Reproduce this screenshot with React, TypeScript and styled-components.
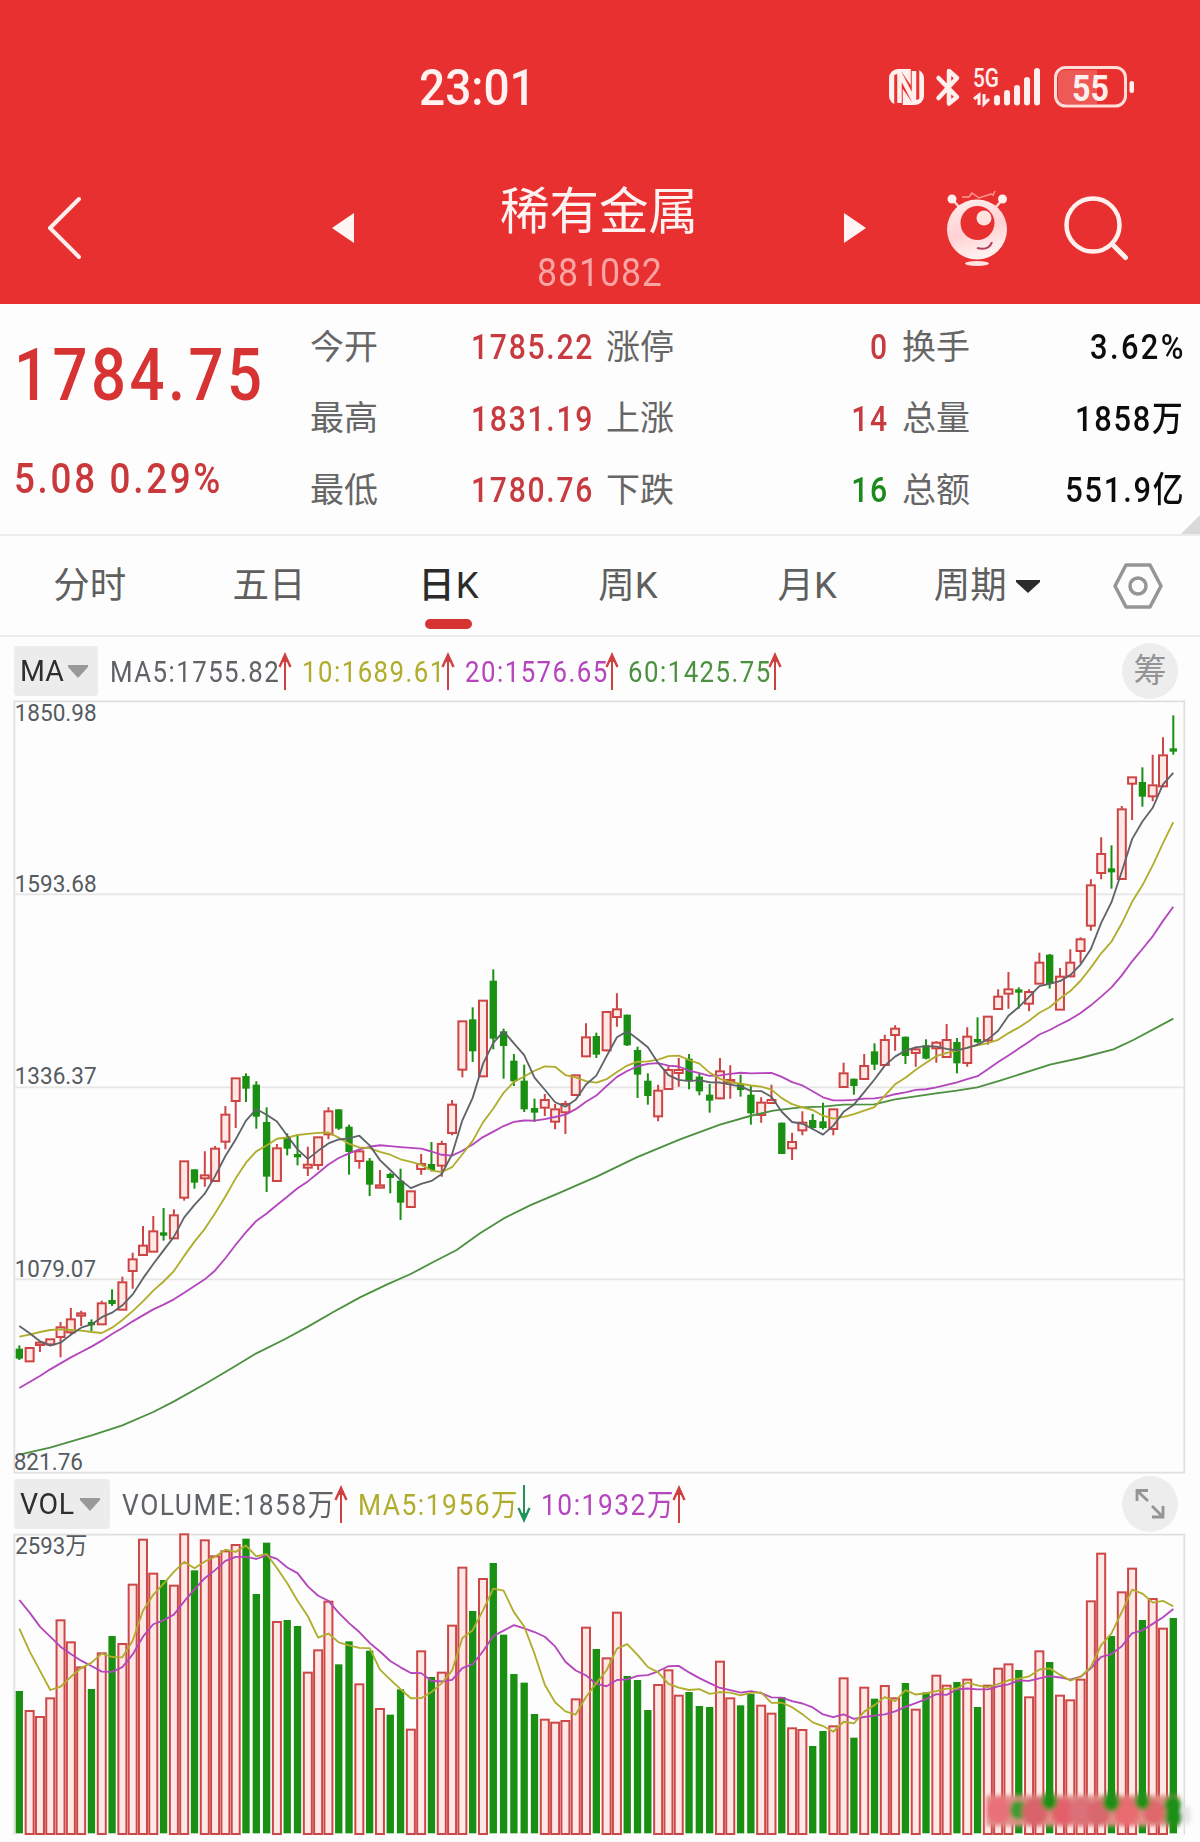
import React from "react";
import styled, { createGlobalStyle } from "styled-components";

const RED = "#d73333";
const GREEN = "#1a9012";
const GREY = "#5f6368";
const OLIVE = "#b0ac2c";
const PURPLE = "#b545bd";
const FOREST = "#4c9040";

/* ---------- data ---------- */

type Candle = [kind: "r" | "g", high: number, top: number, bottom: number, low: number];

// Each session: direction, high, body top, body bottom, low (chart units, three per pixel).
const section = (base: number, rows: string): Candle[] =>
  rows
    .trim()
    .split(/\s+/)
    .map((row) => {
      const [h, t, b, l] = row.slice(1).split(",").map(Number);
      return [row[0] as "r" | "g", h + base, t + base, b + base, l + base];
    });

const candles: Candle[] = [
  ...section(
    1050,
    `g886,896,926,930 r892,892,935,935 r872,876,886,906 r866,866,884,886 r816,830,862,922 r774,806,848,852
     r782,788,798,828 g808,816,826,844 r752,758,824,824 g718,750,762,768 r680,695,780,780 r608,626,664,716
     r528,585,616,616 r498,542,606,606 g474,547,557,572 r478,494,566,566 r332,332,444,452 g358,358,398,416
     r304,374,386,410 r288,294,394,394 r168,192,276,298 r83,83,154,234 g70,78,116,156 g94,104,200,236
     g172,216,380,426 r282,293,394,394 g250,262,296,316 g252,312,322,346 r290,342,354,378 r260,260,346,360
     r172,182,254,268 g178,178,236,240 g224,230,306,374 r300,302,334,356 g324,332,404,438 r360,404,414,414
     g368,372,384,430 g356,392,458,510 r422,422,472,472`
  ),
  ...section(
    750,
    `r612,640,658,674 g576,642,660,664 r572,580,648,680 r450,462,550,556 r212,212,360,382 g172,208,304,336
     r150,150,380,380 g58,92,266,298 g236,244,288,386 g312,332,394,408 g344,392,478,486 g446,474,488,516
     r432,448,474,498 r462,476,516,538 r452,460,488,552 r374,374,436,438 r220,260,320,322 g248,258,314,324
     r184,184,302,304 r130,176,202,230 g194,194,286,288 g290,300,374,444 g370,392,438,464 r404,420,500,514
     r346,358,418,420 r324,358,370,410 g312,326,392,418 g370,380,424,436 g402,434,452,488 r324,362,446,448
     r346,388,398,446 g374,400,420,440 g408,434,490,524 r442,456,496,518 r404,448,460,462 g518,518,612,612
     r548,574,596,630 r484,516,542,556 g492,510,534,540`
  ),
  ...section(
    0,
    `g1208,1264,1284,1288 r1226,1226,1288,1306 r1088,1118,1162,1162 g1136,1136,1158,1184 r1062,1096,1138,1140
     g1030,1054,1094,1110 r1004,1018,1096,1098 r976,984,1006,1052 g1010,1010,1068,1092 r1040,1046,1060,1100
     g1018,1036,1076,1078 r1024,1026,1046,1088 r972,1018,1072,1072 g1014,1026,1090,1120 r982,1008,1090,1100
     g952,1017,1027,1030 r948,948,1022,1034 r868,888,928,930 r816,866,882,926 g862,868,878,926 r868,874,912,934
     r758,786,852,852 g762,764,852,866 r804,828,930,930 r748,786,830,832 r712,716,754,790 r538,554,678,692
     r412,460,520,538 g436,505,517,566 r318,326,538,538 r230,230,252,360 g202,246,290,320 r164,254,290,304
     r112,164,260,260 g46,145,155,164`
  ),
];

const volumes = [
  693, 750, 768, 712, 478, 544, 619, 687, 577, 528, 549, 371, 236, 338, 360, 374, 220, 331, 238, 286, 271, 252, 236,
  402, 248, 483, 480, 498, 635, 568, 422, 613, 544, 670, 572, 744, 764, 688, 806, 571, 651, 635, 494, 320, 453, 354,
  309, 524, 642, 668, 762, 776, 785, 780, 715, 500, 567, 592, 455, 648, 660, 750, 672, 628, 704, 696, 738, 741, 602,
  712, 736, 702, 734, 758, 711, 802, 807, 858, 813, 796, 652, 833, 680, 716, 675, 712, 669, 746, 697, 644, 674, 666,
  656, 741, 674, 623, 610, 630, 709, 571, 606, 704, 718, 656, 421, 278, 528, 394, 323, 480, 414, 503, 474,
];

const xAt = (i: number) => 58 + i * 30.91;

// Moving average whose first values, from before the visible window, are supplied.
const average = (values: number[], span: number, lead: number[]) => [
  ...lead,
  ...values
    .slice(span - 1)
    .map((_, i) => values.slice(i, i + span).reduce((sum, v) => sum + v, 0) / span),
];

const toPoints = (ys: number[]) => ys.map((y, i) => `${xAt(i).toFixed(1)},${y.toFixed(1)}`).join(" ");

const closes = candles.map(([kind, , top, bottom]) => (kind === "r" ? top : bottom));
const ma5 = average(closes, 5, [1878, 1900, 1924, 1937]);
const ma10 = average(closes, 10, [1910, 1904, 1896, 1890, 1888, 1890, 1892, 1896, 1899]);
const ma20 = average(
  closes,
  20,
  [2064, 2046, 2028, 2008, 1990, 1972, 1956, 1940, 1922, 1902, 1884, 1864, 1846, 1828, 1814, 1798, 1778, 1758, 1738]
);
const ma60 =
  "58,2264 150,2243 275,2206 367,2176 460,2136 522,2104 615,2052 690,2008 769,1960 850,1920 924,1880 1000,1836 " +
  "1080,1792 1160,1754 1232,1722 1300,1686 1370,1650 1440,1600 1510,1556 1590,1516 1680,1478 1790,1430 1910,1372 " +
  "2040,1318 2160,1274 2250,1248 2320,1232 2400,1222 2469,1220 2530,1214 2623,1213 2685,1198 2808,1180 2870,1172 " +
  "2932,1162 3000,1142 3150,1094 3241,1074 3340,1048 3400,1020 3520,956";
const volMa5 = average(volumes, 5, [506, 574, 632, 690]);
const volMa10 = average(volumes, 10, [420, 458, 500, 530, 560, 582, 602, 618, 635]);

/* ---------- styles ---------- */

const GlobalStyle = createGlobalStyle`
  body { margin: 0; background: #fdfdfd; }
  * { box-sizing: border-box; }
`;

const Page = styled.div`
  width: 1200px;
  height: 1842px;
  display: flex;
  flex-direction: column;
  overflow: hidden;
  background: #fdfdfd;
  font-family: Roboto, "Noto Sans CJK SC", sans-serif;
`;

const Header = styled.header`
  height: 304px;
  flex: none;
  background: #e83030;
  color: #fff2f0;
`;

const StatusBar = styled.div`
  height: 150px;
  padding: 26px 65px 0 419px;
  display: flex;
  align-items: center;
  justify-content: space-between;
`;

const Squeezed = styled.span<{ $size: number; $x?: number; $track?: number; $from?: string; $weight?: number; $color?: string }>`
  display: inline-block;
  white-space: pre;
  line-height: 1;
  font-size: ${(p) => p.$size}px;
  font-weight: ${(p) => p.$weight ?? 400};
  color: ${(p) => p.$color ?? "inherit"};
  letter-spacing: ${(p) => p.$track ?? 0.057}em;
  margin-right: -${(p) => p.$track ?? 0.057}em;
  transform: scaleX(${(p) => p.$x ?? 0.86});
  transform-origin: ${(p) => p.$from ?? "left"} center;
`;

const StatusIcons = styled.svg`
  width: 250px;
  height: 64px;
  display: block;
  overflow: visible;
`;

const NavBar = styled.div`
  height: 154px;
  display: grid;
  grid-template-columns: 332px 22px 490px 22px 81px 60px 61px 132px;
  align-items: center;
`;

const NavSvg = styled.svg<{ $ml?: number; $mt?: number }>`
  display: block;
  overflow: visible;
  margin-left: ${(p) => p.$ml ?? 0}px;
  margin-top: ${(p) => p.$mt ?? 0}px;
`;

const TitleBlock = styled.div`
  display: flex;
  flex-direction: column;
  align-items: center;
  gap: 17px;
  padding-top: 25px;
`;

const Title = styled.h1`
  margin: 0;
  font-size: 49.5px;
  line-height: 50px;
  font-weight: 400;
`;

const Quote = styled.section`
  height: 232px;
  flex: none;
  border-bottom: 2px solid #ececec;
  display: grid;
  grid-template-columns: 310px 282px 14px 281px 15px 281px 17px;
  position: relative;
`;

const Headline = styled.div`
  color: ${RED};
  display: flex;
  flex-direction: column;
  padding: 36px 0 0 14px;
  gap: 46px;
`;

const Stats = styled.dl<{ $col: number }>`
  margin: 0;
  grid-column: ${(p) => p.$col};
  grid-row: 1;
  padding-top: 7px;
  display: flex;
  flex-direction: column;
`;

const Stat = styled.div`
  height: 71.5px;
  display: flex;
  align-items: center;
  justify-content: space-between;
`;

const StatLabel = styled.dt`
  font-size: 34px;
  line-height: 40px;
  color: #666;
`;

const StatValue = styled.dd`
  margin: 0;
  padding-top: 2px;
  display: flex;
`;

const Corner = styled.i`
  position: absolute;
  right: 0;
  bottom: 0;
  border-style: solid;
  border-width: 0 0 19px 19px;
  border-color: transparent transparent #d9d9d9 transparent;
`;

const Tabs = styled.nav`
  height: 101px;
  flex: none;
  border-bottom: 2px solid #ececec;
  display: grid;
  grid-template-columns: repeat(6, 179.4px) 1fr;
`;

const Tab = styled.div<{ $active?: boolean }>`
  display: flex;
  align-items: center;
  justify-content: center;
  gap: ${(p) => (p.$active ? 1 : 9)}px;
  padding-top: 1px;
  font-size: 36.5px;
  line-height: 50px;
  font-weight: ${(p) => (p.$active ? 500 : 400)};
  color: ${(p) => (p.$active ? "#2b2b2b" : "#5f5f5f")};
  position: relative;
`;

const Latin = styled.span`
  font-weight: 400;
`;

const Underline = styled.i`
  position: absolute;
  left: 66px;
  bottom: 6px;
  width: 47px;
  height: 10px;
  border-radius: 5px;
  background: ${RED};
`;

const Legend = styled.div<{ $h: number; $pad: number }>`
  height: ${(p) => p.$h}px;
  flex: none;
  display: flex;
  align-items: center;
  padding: ${(p) => p.$pad}px 22px 0 14px;
`;

const Chip = styled.div<{ $w: number; $after: number }>`
  width: ${(p) => p.$w}px;
  height: 50px;
  margin-right: ${(p) => p.$after}px;
  padding: 0 10px 0 6px;
  border-radius: 3px;
  background: #ececec;
  color: #2e2e2e;
  display: flex;
  align-items: center;
  justify-content: space-between;
`;

const Reading = styled.div<{ $w: number; $color: string }>`
  width: ${(p) => p.$w}px;
  flex: none;
  color: ${(p) => p.$color};
  display: flex;
  align-items: center;
  justify-content: space-between;
`;

const ReadingText = styled.div`
  width: 0;
  padding-top: 2px;
  display: flex;
`;

const Trend = styled.svg`
  width: 14px;
  height: 38px;
  flex: none;
`;

const Round = styled.div`
  width: 56px;
  height: 56px;
  margin-left: auto;
  border-radius: 50%;
  background: #ededed;
  color: #939393;
  font-size: 33px;
  line-height: 56px;
  display: flex;
  align-items: center;
  justify-content: center;
`;

const Plot = styled.svg<{ $h: number }>`
  width: 1200px;
  height: ${(p) => p.$h}px;
  flex: none;
  display: block;
  overflow: visible;
`;

/* ---------- parts ---------- */

const Arrow = ({ down }: { down?: boolean }) => (
  <Trend viewBox="0 0 14 38" fill="none" stroke={down ? "#24935a" : "#cf4040"} strokeWidth="2">
    <g transform={down ? "rotate(180 7 19)" : undefined}>
      <path d="M7 38V3" />
      <path d="M1.5 15L7 3L12.5 15" strokeWidth="2.4" />
      <path d="M4 10L7 1L10 10Z" fill={down ? "#24935a" : "#cf4040"} stroke="none" />
    </g>
  </Trend>
);

const ReadingItem = ({ text, w, color, gap, down }: { text: string; w: number; color: string; gap: number; down?: boolean }) => (
  <Reading $w={w} $color={color} style={{ marginRight: gap }}>
    <ReadingText>
      <Squeezed $size={30} $x={text.includes("万") ? 0.88 : 0.86}>{text}</Squeezed>
    </ReadingText>
    <Arrow down={down} />
  </Reading>
);

const Caret = ({ color, w = 20 }: { color: string; w?: number }) => (
  <svg width={w} height="13" viewBox="0 0 20 13" preserveAspectRatio="none">
    <path d="M0 0H20V2L10 13L0 2Z" fill={color} />
  </svg>
);

const StatusGlyphs = () => (
  <StatusIcons viewBox="885 56 250 64">
    <rect x="889" y="69" width="35" height="36" rx="9" fill="#fff0ee" />
    <path d="M898.500 106V75L915 99V68" fill="none" stroke="#e83030" strokeWidth="8.500" strokeLinejoin="bevel" />
    <path d="M899.500 103V73L914 101V71" fill="none" stroke="#fff0ee" strokeWidth="4.500" strokeLinejoin="bevel" />
    <path d="M938.500 78L957 97L949 103.500V71L957 78L938.500 98" fill="none" stroke="#fff0ee" strokeWidth="4.500" strokeLinejoin="round" strokeLinecap="round" />
    <text x="973" y="86.500" fontSize="25" fontWeight="500" fill="#fff0ee" textLength="26" lengthAdjust="spacingAndGlyphs">5G</text>
    <path d="M974 99L979 95V105M984 94V104L989 99" fill="none" stroke="#fff0ee" strokeWidth="3" />
    <g stroke="#fff0ee" strokeWidth="6" strokeLinecap="round">
      <path d="M997 98V102.500M1007 93V102.500M1017 88V102.500M1027 80V102.500M1037 71V102.500" />
    </g>
    <rect x="1055.500" y="67.500" width="70" height="38.500" rx="10" fill="none" stroke="#ffdeda" strokeWidth="3" />
    <path d="M1066 70H1097V104H1066Q1058 104 1058 96V78Q1058 70 1066 70Z" fill="#ed5a56" />
    <rect x="1129.500" y="81" width="4.500" height="12" rx="2" fill="#fff0ee" />
    <text x="1072" y="100.500" fontSize="36" fontWeight="700" fill="#fff0ee" textLength="37" lengthAdjust="spacingAndGlyphs">55</text>
  </StatusIcons>
);

const Mascot = () => (
  <NavSvg width="60" height="76" viewBox="947 191 60 76" $mt={4}>
    <defs>
      <linearGradient id="ball" x1="0" y1="0" x2="0.3" y2="1">
        <stop offset="0" stopColor="#fff3f1" />
        <stop offset="0.6" stopColor="#ffd0d2" />
        <stop offset="1" stopColor="#fff0ee" />
      </linearGradient>
    </defs>
    <path d="M952 199L960 208M1003 199L995 208" stroke="#ffd9d6" strokeWidth="2.500" />
    <circle cx="952" cy="199" r="4.500" fill="#fff0ee" />
    <circle cx="1002.500" cy="199" r="4.500" fill="#fff0ee" />
    <path d="M962 197L969 197L972 193L979 198L991 194L993 195L995 191" fill="none" stroke="#ff9a90" strokeWidth="1.500" />
    <circle cx="977" cy="229.500" r="30" fill="url(#ball)" />
    <circle cx="977.500" cy="223" r="17" fill="#e83030" />
    <circle cx="984" cy="218" r="7.500" fill="#ffe3e1" />
    <path d="M977 248Q989 251 992 242" fill="none" stroke="#b0405c" strokeWidth="2" />
    <ellipse cx="977" cy="263.500" rx="12" ry="2.500" fill="#ffe3e1" />
  </NavSvg>
);

const PriceChart = () => (
  <Plot $h={772} viewBox="0 3 3600 2316">
    <g stroke="#dfdfdf" strokeWidth="5" fill="none">
      <path d="M43 4H3553V2318H43Z" />
      <path d="M43 583H3553M43 1162H3553M43 1738H3553" stroke="#e6e6e6" />
    </g>
    {candles.map(([kind, high, top, bottom, low], i) => {
      const x = xAt(i);
      return kind === "g" ? (
        <g key={i} fill={GREEN}>
          <rect x={x - 3} y={high} width="6" height={low - high} />
          <rect x={x - 11} y={top} width="22" height={bottom - top} />
        </g>
      ) : (
        <g key={i} stroke="#cc4444" strokeWidth="6">
          <path d={`M${x} ${high}V${top}M${x} ${bottom}V${low}`} />
          <rect x={x - 12} y={top + 2} width="24" height={Math.max(bottom - top - 3, 5)} fill="#ffe9e7" />
        </g>
      );
    })}
    <g fill="none" strokeWidth="5.500" strokeLinejoin="round">
      <polyline points={ma60} stroke={FOREST} />
      <polyline points={toPoints(ma20)} stroke={PURPLE} />
      <polyline points={toPoints(ma10)} stroke={OLIVE} />
      <polyline points={toPoints(ma5)} stroke={GREY} />
    </g>
    <g fontSize="71" fill="#555b60">
      <text x="44" y="64" textLength="246" lengthAdjust="spacingAndGlyphs">1850.98</text>
      <text x="44" y="577" textLength="246" lengthAdjust="spacingAndGlyphs">1593.68</text>
      <text x="44" y="1152" textLength="246" lengthAdjust="spacingAndGlyphs">1336.37</text>
      <text x="44" y="1731" textLength="244" lengthAdjust="spacingAndGlyphs">1079.07</text>
      <text x="41" y="2310" textLength="208" lengthAdjust="spacingAndGlyphs">821.76</text>
    </g>
  </Plot>
);

const blobs: [number, number, number, string][] = [
  [2995, 1050, 36, "#ea7078"],
  [3055, 1050, 26, "#3f9a30"],
  [3105, 1056, 38, "#d9646a"],
  [3190, 1056, 36, "#e3606a"],
  [3148, 1024, 24, "#1f9018"],
  [3245, 1056, 38, "#dc7078"],
  [3296, 1058, 34, "#d8686c"],
  [3380, 1056, 38, "#e86c70"],
  [3334, 1026, 26, "#1f9018"],
  [3462, 1056, 32, "#de686c"],
  [3427, 1024, 23, "#1f9018"],
  [3518, 1036, 26, "#1a9012"],
  [3520, 1072, 26, "#1a9012"],
];

const VolumeChart = () => (
  <Plot $h={308} viewBox="0 222 3600 924">
    <path d="M43 1125V224H3553V1125" stroke="#dfdfdf" strokeWidth="5" fill="none" />
    <text x="46" y="282" fontSize="71" fill="#555b60" textLength="216" lengthAdjust="spacingAndGlyphs">
      2593万
    </text>
    {volumes.map((top, i) =>
      candles[i][0] === "g" ? (
        <rect key={i} x={xAt(i) - 11} y={top} width="22" height={1120 - top} fill={GREEN} />
      ) : (
        <rect key={i} x={xAt(i) - 12} y={top + 3} width="24" height={1119 - top} fill="#ffe9e7" stroke="#cc4848" strokeWidth="6" />
      )
    )}
    <g fill="none" strokeWidth="5.500" strokeLinejoin="round">
      <polyline points={toPoints(volMa10)} stroke={PURPLE} />
      <polyline points={toPoints(volMa5)} stroke={OLIVE} />
    </g>
    <filter id="smudge" x="-10%" y="-30%" width="120%" height="160%">
      <feGaussianBlur stdDeviation="6" />
    </filter>
    <g filter="url(#smudge)">
      <rect x="2958" y="1006" width="580" height="92" fill="#e09088" />
      {blobs.map(([x, y, r, fill]) => (
        <ellipse key={x} cx={x} cy={y} rx={r} ry={r * 1.15} fill={fill} />
      ))}
      <ellipse cx="3560" cy="1065" rx="12" ry="30" fill="#e4e4e4" />
    </g>
  </Plot>
);

const statColumns: { col: number; rows: [string, string, string][] }[] = [
  { col: 2, rows: [["今开", "1785.22", "#c73b40"], ["最高", "1831.19", "#c73b40"], ["最低", "1780.76", "#c73b40"]] },
  { col: 4, rows: [["涨停", "0", "#c73b40"], ["上涨", "14", "#c73b40"], ["下跌", "16", "#1a8a1a"]] },
  { col: 6, rows: [["换手", "3.62%", "#0c0c0c"], ["总量", "1858万", "#0c0c0c"], ["总额", "551.9亿", "#0c0c0c"]] },
];

export default function App() {
  return (
    <Page>
      <GlobalStyle />
      <Header>
        <StatusBar>
          <Squeezed $size={50} $x={0.92} $track={0} $weight={500}>23:01</Squeezed>
          <StatusGlyphs />
        </StatusBar>
        <NavBar>
          <NavSvg width="34" height="62" viewBox="0 0 34 62" $ml={47} $mt={2}>
            <path d="M32 2L3 31L32 60" fill="none" stroke="#fff0ee" strokeWidth="4" strokeLinecap="round" strokeLinejoin="round" />
          </NavSvg>
          <NavSvg width="22" height="30" viewBox="0 0 22 30" $mt={2}>
            <path d="M22 0V30L0 15Z" fill="#fff6f4" />
          </NavSvg>
          <TitleBlock>
            <Title>稀有金属</Title>
            <Squeezed $size={38} $x={0.94} $track={0.025} $from="center" $color="#f9a5a3">881082</Squeezed>
          </TitleBlock>
          <NavSvg width="22" height="30" viewBox="0 0 22 30" $mt={2}>
            <path d="M0 0V30L22 15Z" fill="#fff6f4" />
          </NavSvg>
          <span />
          <Mascot />
          <span />
          <NavSvg width="64" height="64" viewBox="1064 196 64 64" $ml={-4} $mt={2}>
            <circle cx="1093" cy="225" r="26.500" fill="none" stroke="#fff0ee" strokeWidth="4.500" />
            <path d="M1112 244L1125.500 257.500" stroke="#fff0ee" strokeWidth="5" strokeLinecap="round" />
          </NavSvg>
        </NavBar>
      </Header>

      <Quote>
        <Headline>
          <Squeezed $size={72} $weight={500} $x={0.855}>1784.75</Squeezed>
          <Squeezed $size={42} $weight={500} $x={0.875} $track={0.074} $color="#c9393c">5.08 0.29%</Squeezed>
        </Headline>
        {statColumns.map(({ col, rows }) => (
          <Stats key={col} $col={col}>
            {rows.map(([label, value, color]) => (
              <Stat key={label}>
                <StatLabel>{label}</StatLabel>
                <StatValue>
                  <Squeezed $size={35} $weight={500} $x={col === 6 ? 0.88 : 0.86} $track={value.endsWith("%") ? 0.078 : 0.057} $from="right" $color={color}>
                    {value}
                  </Squeezed>
                </StatValue>
              </Stat>
            ))}
          </Stats>
        ))}
        <Corner />
      </Quote>

      <Tabs>
        <Tab>分时</Tab>
        <Tab>五日</Tab>
        <Tab $active>
          日<Latin>K</Latin>
          <Underline />
        </Tab>
        <Tab>周K</Tab>
        <Tab>月K</Tab>
        <Tab>
          周期
          <Caret color="#2b2b2b" w={24} />
        </Tab>
        <Tab>
          <svg width="50" height="46" viewBox="0 0 50 46" fill="none" stroke="#959595" strokeWidth="3.500" strokeLinejoin="round">
            <path d="M13 2H37L48 23L37 44H13L2 23Z" />
            <circle cx="25" cy="23" r="8" />
          </svg>
        </Tab>
      </Tabs>

      <Legend $h={64} $pad={4}>
        <Chip $w={84} $after={12}>
          <Squeezed $size={30} $x={0.95} $track={0}>MA</Squeezed>
          <Caret color="#999" />
        </Chip>
        <ReadingItem text="MA5:1755.82" w={182} color={GREY} gap={10} />
        <ReadingItem text="10:1689.61" w={153} color={OLIVE} gap={10} />
        <ReadingItem text="20:1576.65" w={154} color={PURPLE} gap={9} />
        <ReadingItem text="60:1425.75" w={154} color={FOREST} gap={0} />
        <Round>筹</Round>
      </Legend>
      <PriceChart />

      <Legend $h={61} $pad={1}>
        <Chip $w={96} $after={12}>
          <Squeezed $size={30} $x={0.95} $track={0.02}>VOL</Squeezed>
          <Caret color="#999" />
        </Chip>
        <ReadingItem text="VOLUME:1858万" w={226} color={GREY} gap={10} />
        <ReadingItem text="MA5:1956万" w={173} color={OLIVE} gap={10} down />
        <ReadingItem text="10:1932万" w={145} color={PURPLE} gap={0} />
        <Round>
          <svg width="30" height="30" viewBox="0 0 30 30" fill="none" stroke="#949494" strokeWidth="2.800">
            <path d="M13 1.500H2V12M2 1.500L13 12M17 17L28 28M28 17V28H17" />
          </svg>
        </Round>
      </Legend>
      <VolumeChart />
    </Page>
  );
}
